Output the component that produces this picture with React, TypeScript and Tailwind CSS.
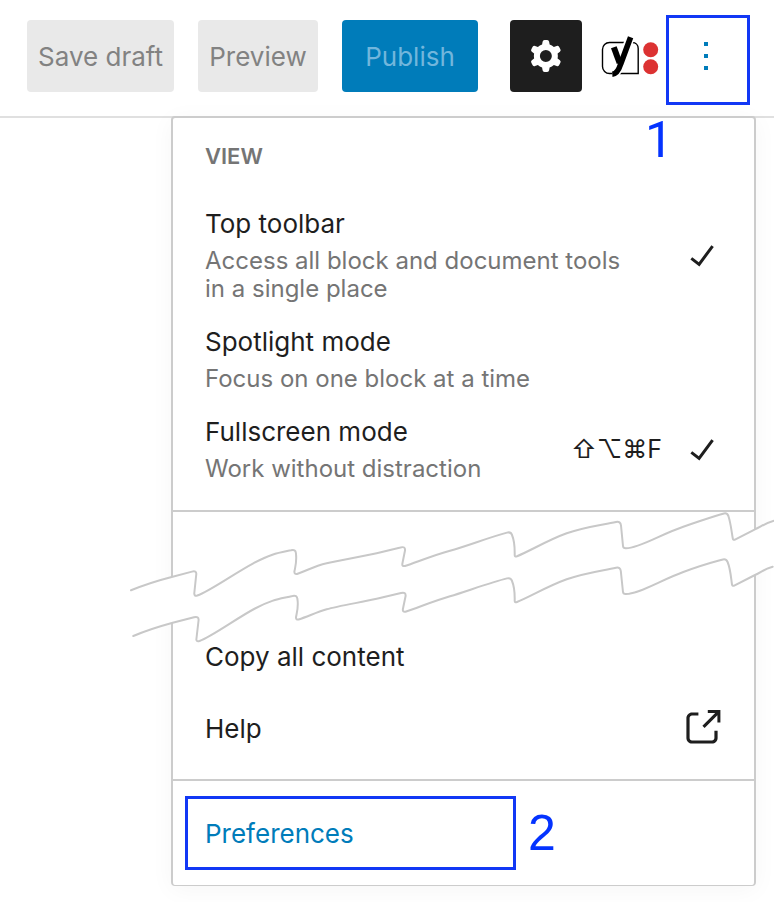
function CogIcon() {
  return (
    <svg viewBox="0 0 24 24" className="size-12" fill="currentColor" fillRule="evenodd" aria-hidden="true">
      <path d="M10.289 4.836A1 1 0 0111.275 4h1.306a1 1 0 01.987.836l.244 1.466c.787.26 1.503.679 2.108 1.218l1.393-.522a1 1 0 011.216.437l.653 1.13a1 1 0 01-.23 1.273l-1.148.944a6.025 6.025 0 010 2.435l1.149.946a1 1 0 01.23 1.272l-.653 1.13a1 1 0 01-1.216.437l-1.394-.522c-.605.54-1.32.958-2.108 1.218l-.244 1.466a1 1 0 01-.987.836h-1.306a1 1 0 01-.986-.836l-.244-1.466a5.995 5.995 0 01-2.108-1.218l-1.394.522a1 1 0 01-1.217-.436l-.653-1.131a1 1 0 01.23-1.272l1.149-.946a6.026 6.026 0 010-2.435l-1.148-.944a1 1 0 01-.23-1.272l.653-1.131a1 1 0 011.217-.437l1.393.522a5.994 5.994 0 012.108-1.218l.244-1.466zM14.929 12a3 3 0 11-6 0 3 3 0 016 0z" />
    </svg>
  );
}

function YoastIcon() {
  return (
    <svg viewBox="0 0 60 50" className="h-[50px] w-[60px]" fill="none" aria-hidden="true">
      <path
        d="M38.2 42.5H9.5a7 7 0 0 1-7-7v-17a7 7 0 0 1 7-7h22.7c3.6 0 6 2.4 6 6z"
        stroke="#000"
        strokeWidth="1.4"
      />
      <g strokeLinejoin="miter">
        <path d="M13.5 16.5 19.3 32M30.3 6.5 20.3 33.5C18.6 38.6 16.6 42.6 12.3 42.9" stroke="#fff" strokeWidth="9" />
        <path d="M13.8 16.3 19.6 32" stroke="#000" strokeWidth="6" />
        <path d="M30.6 6.3 20.7 33C18.8 39 16.6 42.9 12.3 43.2" stroke="#000" strokeWidth="5.6" />
      </g>
      <circle cx="50.7" cy="18.7" r="7.5" fill="#dc3232" />
      <circle cx="50.7" cy="35.7" r="7.5" fill="#dc3232" />
    </svg>
  );
}

function MoreIcon() {
  return (
    <svg viewBox="0 0 24 24" className="size-12" fill="currentColor" aria-hidden="true">
      <path d="M11 5h2v2h-2zM11 11h2v2h-2zM11 17h2v2h-2z" />
    </svg>
  );
}

function CheckIcon() {
  return (
    <svg viewBox="0 0 24 24" className="size-12 shrink-0" fill="currentColor" aria-hidden="true">
      <path d="M16.7 7.1l-6.3 8.5-3.3-2.5-.9 1.2 4.5 3.4L17.9 8z" />
    </svg>
  );
}

function ExternalIcon() {
  return (
    <svg viewBox="0 0 24 24" className="size-12 shrink-0" fill="currentColor" aria-hidden="true">
      <path d="M18.2 17c0 .7-.6 1.2-1.2 1.2H7c-.7 0-1.2-.6-1.2-1.2V7c0-.7.6-1.2 1.2-1.2h3.2V4.2H7C5.5 4.2 4.2 5.5 4.2 7v10c0 1.5 1.2 2.8 2.8 2.8h10c1.5 0 2.8-1.2 2.8-2.8v-3.6h-1.6V17zM14.9 3v1.5h3.7l-6.4 6.4 1.1 1.1 6.4-6.4v3.7h1.5V3h-6.3z" />
    </svg>
  );
}

// Torn strip across the menu: a white band between two ragged edges
function TornEdge() {
  return (
    <svg
      viewBox="0 0 644 132"
      className="pointer-events-none absolute top-0 -left-[43px] h-[132px] w-[644px]"
      fill="none"
      aria-hidden="true"
    >
      <path
        fill="#fff"
        d="M1 78 41 65 65 59 66 83 123 51 164 38 166 61 247 41 274 36 274 54 380 21 385 44 437 21 489 10 494 36 596 2 603 28 625 17 644 9V55L625 63 603 74 594 48 494 81 487 56 437 67 385 90 378 67 274 99 272 81 168 107 163 84 125 96 68 128 66 105 42 111 3 124z"
      />
      <g stroke="#c8c8c8" strokeWidth="2" strokeLinecap="round" strokeLinejoin="round">
        <path d="M1 78.3C14 73 30 68 41.7 65L62 59.6Q66.5 58.5 66.3 62L64.3 81Q64 84.5 67.3 83.5C80 79 105 61 123.3 51.3S148 41 161 38.3Q165.6 37 165.9 41C167 50 165.5 54 164.4 59.5Q164.3 62.5 167 62C178 58 185 54 196.7 51.3S230 45 246.7 41.3L270.5 35.5Q275.5 34 275 38.5L272.4 51.5Q271.8 54.6 275 54C287 50 304 43 320 38.7S360 25 377 20.6Q381 19.6 382 23C385 30 384.7 36 384.7 43Q384.6 45 387 44.2C400 39 418 28 436.7 21.3S472 13 486 9.9Q490.5 9 491 13.5L493 34Q493.2 36.4 496 36.3C510 36 530 22.5 553.3 14.7S583 4.4 594 1.5Q597 .7 598.4 4C601 12 601.5 20 602.8 26.5Q603 28.6 605.5 27.3L625 17.3C631 15 634 11.6 644 8.7" />
        <path d="M3.3 124C16 118.7 31 114 42.7 110.8L64 105.2Q68.8 104 68.6 108L66.4 127Q66 130 69.5 129C82 124.5 107 106 125 96.5S150 87 162.5 84Q167 82.7 167.4 87C168.7 95 167 100 166 105.2Q165.9 108 168.6 107.5C179 104 186 100.5 196.7 97.3S230 90.5 246.7 86.8L271 81Q276 79.7 275.6 84L272.9 97Q272.4 100.3 275.5 99.7C288 95.6 304 89 320 84.3S360 70.6 377 66.4Q381 65.4 382 69C385 76 384.7 82 384.7 88.5Q384.6 91 387 90C400 84.7 418 74 436.7 67.3S472 58.8 486 55.7Q490.3 54.8 490.8 59L493 80Q493.2 82.2 496 82C510 81.5 530 68.5 553.3 60S582 50.5 593 47.5Q596 46.7 597.6 50C600.5 57 601 66 602 72.5Q602.2 74.6 604.7 73.3L625 63C631 60.5 634 57 642.7 54.7" />
      </g>
    </svg>
  );
}

type ModeItemProps = {
  title: string;
  description: string;
  checked?: boolean;
  shortcut?: string;
};

function ModeItem({ title, description, checked = false, shortcut }: ModeItemProps) {
  return (
    <button
      type="button"
      role="menuitemcheckbox"
      aria-checked={checked}
      className="flex w-full items-center justify-between text-left"
    >
      <span className="flex max-w-[430px] flex-col gap-[5px]">
        <span className="text-[26px] leading-9">{title}</span>
        <span className="text-[24px] leading-7 text-[#757575]">{description}</span>
      </span>
      <span className="flex items-center gap-4">
        {shortcut && <span className="text-[25px] leading-9">{shortcut}</span>}
        {checked && <CheckIcon />}
      </span>
    </button>
  );
}

export default function App() {
  return (
    <div className="min-h-screen bg-white font-['Inter','Liberation_Sans',sans-serif] text-[#1e1e1e]">
      <header className="flex items-start justify-end border-b-2 border-[#e0e0e0] pr-6 pb-[11px] pt-[15px]">
        <div className="mt-[5px] flex items-center">
          <div className="flex gap-6">
            <button type="button" className="h-[72px] w-[147px] rounded bg-[#e9e9e9] text-[26px] text-[#828282]">
              Save draft
            </button>
            <button type="button" className="h-[72px] w-[120px] rounded bg-[#e9e9e9] text-[26px] text-[#828282]">
              Preview
            </button>
            <button type="button" className="h-[72px] w-[136px] rounded bg-[#007cba] text-[26px] text-[#72b6dc]">
              Publish
            </button>
          </div>
          <button
            type="button"
            aria-label="Settings"
            className="ml-8 flex size-[72px] items-center justify-center rounded bg-[#1e1e1e] text-white"
          >
            <CogIcon />
          </button>
          <button type="button" aria-label="Yoast SEO" className="ml-[18px]">
            <YoastIcon />
          </button>
        </div>
        <button
          type="button"
          aria-label="Options"
          className="ml-[6px] flex h-[90px] w-[84px] items-center justify-center border-3 border-[#1238f5] pr-1 pb-2 text-[#007cba]"
        >
          <MoreIcon />
        </button>
      </header>

      <div className="-mt-0.5 flex justify-end pr-[18px]">
        <div
          role="menu"
          className="relative w-[585px] rounded border-2 border-b border-[#ccc] bg-white shadow-[0_4px_24px_rgba(0,0,0,0.04)]"
        >
          <span className="absolute top-0.5 left-[472px] font-['Roboto',sans-serif] text-[50px] leading-10 text-[#0433ff]">
            1
          </span>

          <section className="border-b-2 border-[#ccc] pt-5 pr-7 pb-[27px] pl-8">
            <h2 className="text-[22px] leading-9 font-semibold text-[#757575]">VIEW</h2>
            <div className="mt-8 flex flex-col gap-[21px]">
              <ModeItem
                title="Top toolbar"
                description="Access all block and document tools in a single place"
                checked
              />
              <ModeItem title="Spotlight mode" description="Focus on one block at a time" />
              <ModeItem title="Fullscreen mode" description="Work without distraction" checked shortcut="⇧⌥⌘F" />
            </div>
          </section>

          <section className="relative border-b-2 border-[#ccc] pt-[108px] pb-[15px]">
            <TornEdge />
            <button type="button" role="menuitem" className="flex h-[72px] w-full items-center px-8 text-[26px]">
              Copy all content
            </button>
            <a
              href="#help"
              role="menuitem"
              className="flex h-[72px] items-center justify-between pr-7 pl-8 text-[26px]"
            >
              Help
              <ExternalIcon />
            </a>
          </section>

          <section className="flex items-center gap-3 px-3 py-[15px]">
            <button
              type="button"
              role="menuitem"
              className="h-[74px] w-[331px] border-3 border-[#1238f5] pl-[17px] text-left text-[26px] text-[#007cba]"
            >
              Preferences
            </button>
            <span className="font-['Liberation_Sans',sans-serif] text-[50px] leading-[58px] text-[#0433ff]">2</span>
          </section>
        </div>
      </div>
    </div>
  );
}
